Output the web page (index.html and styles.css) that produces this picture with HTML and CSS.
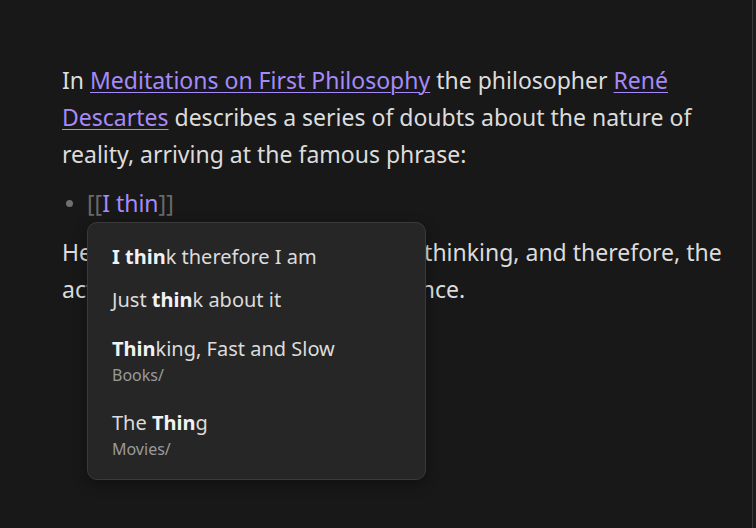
FILE: index.html
```html
<!DOCTYPE html>
<html>
<head>
<meta charset="utf-8">
<link rel="stylesheet" href="styles.css">
</head>
<body>
<div class="pane">
  <div class="content">
    <p class="para">In <a class="link" href="#">Meditations on First Philosophy</a> the philosopher <a class="link" href="#">René Descartes</a> describes a series of doubts about the nature of reality, arriving at the famous phrase:</p>
    <ul class="list">
      <li class="item"><span class="bracket">[[</span><span class="typed">I thin</span><span class="bracket">]]</span>
        <div class="suggest">
          <div class="option"><div class="title"><b>I thin</b>k therefore I am</div></div>
          <div class="option"><div class="title">Just <b>thin</b>k about it</div></div>
          <div class="option has-path"><div class="title"><b>Thin</b>king, Fast and Slow</div><div class="path">Books/</div></div>
          <div class="option has-path"><div class="title">The <b>Thin</b>g</div><div class="path">Movies/</div></div>
        </div>
      </li>
    </ul>
    <p class="para">He claimed that doubting is itself thinking, and therefore, the act of thinking is a proof of existence.</p>
  </div>
  <div class="scrollbar"></div>
</div>
</body>
</html>
```
FILE: styles.css
```css
html, body {
  margin: 0;
  padding: 0;
  background: #181818;
  height: 100%;
}
.pane {
  display: flex;
  height: 528px;
  overflow: hidden;
  font-family: "Noto Sans", "Open Sans", sans-serif;
  color: #dcdcdc;
}
.content {
  flex: 1;
  padding: 62px 24px 0 62px;
  font-size: 23px;
  line-height: 37px;
}
.scrollbar {
  width: 3px;
  border-left: 1px solid #3a3a3a;
  background: #1c1c1c;
}
.para {
  margin: 0 0 12px 0;
}
.link {
  color: #a68af9;
  text-decoration: underline;
  text-underline-offset: 3px;
  text-decoration-thickness: 1px;
}
.list {
  margin: 0 0 12px 0;
  padding: 0 0 0 25px;
  list-style: none;
}
.item {
  position: relative;
}
.item::before {
  content: "";
  position: absolute;
  left: -21px;
  top: 15px;
  width: 7px;
  height: 7px;
  border-radius: 50%;
  background: #707070;
}
.bracket {
  color: #6a6a6a;
}
.typed {
  color: #a68af9;
}
.suggest {
  position: absolute;
  left: 0;
  top: 37px;
  width: 313px;
  padding: 12px 12px 10px 12px;
  background: #262626;
  border: 1px solid #3a3a3a;
  border-radius: 10px;
  z-index: 2;
  font-size: 20px;
  line-height: 27px;
  box-shadow: 0 4px 14px rgba(0,0,0,0.35);
}
.option {
  padding: 8px 12px 8px 12px;
}
.option.has-path {
  padding: 14px 12px 6px 12px;
}
.title {
  color: #dcdcdc;
}
.title b {
  font-weight: 700;
  color: #f2f2f2;
}
.path {
  color: #9a9a9a;
  font-size: 16px;
  line-height: 27px;
}
```
